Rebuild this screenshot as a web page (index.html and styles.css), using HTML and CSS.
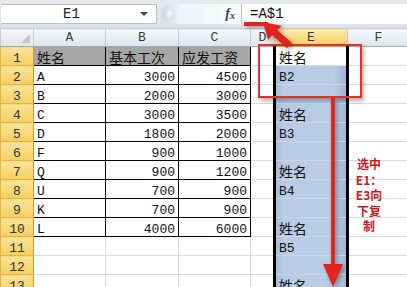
FILE: index.html
```html
<!DOCTYPE html>
<html lang="zh">
<head>
    <meta charset="UTF-8">
    <meta name="viewport" content="width=device-width, initial-scale=1.0">
    <title>向下复制公式</title>
    <link rel="stylesheet" href="styles.css">
</head>
<body>
    <div class="window">
        <div class="formula-bar">
            <div class="name-box">
                <span class="name">E1</span>
                <span class="drop"></span>
            </div>
            <div class="grip"><span></span></div>
            <div class="fx">f<sub>x</sub></div>
            <div class="formula">=A$1</div>
        </div>

        <table class="sheet">
            <colgroup>
                <col class="c-row">
                <col class="c-a">
                <col class="c-b">
                <col class="c-c">
                <col class="c-d">
                <col class="c-e">
                <col class="c-f">
            </colgroup>
            <tr class="hdr">
                <th class="corner"><span></span></th>
                <th>A</th><th>B</th><th>C</th><th>D</th><th class="on">E</th><th>F</th>
            </tr>
            <tr><th>1</th><td class="t h zh">姓名</td><td class="t h zh">基本工次</td><td class="t h zh">应发工资</td><td></td><td class="e act zh">姓名</td><td></td></tr>
            <tr><th>2</th><td class="t">A</td><td class="t n">3000</td><td class="t n">4500</td><td></td><td class="e sel">B2</td><td></td></tr>
            <tr><th>3</th><td class="t">B</td><td class="t n">2000</td><td class="t n">3000</td><td></td><td class="e sel"></td><td></td></tr>
            <tr><th>4</th><td class="t">C</td><td class="t n">3000</td><td class="t n">3500</td><td></td><td class="e sel zh">姓名</td><td></td></tr>
            <tr><th>5</th><td class="t">D</td><td class="t n">1800</td><td class="t n">2000</td><td></td><td class="e sel">B3</td><td></td></tr>
            <tr><th>6</th><td class="t">F</td><td class="t n">900</td><td class="t n">1000</td><td></td><td class="e sel"></td><td></td></tr>
            <tr><th>7</th><td class="t">Q</td><td class="t n">900</td><td class="t n">1200</td><td></td><td class="e sel zh">姓名</td><td></td></tr>
            <tr><th>8</th><td class="t">U</td><td class="t n">700</td><td class="t n">900</td><td></td><td class="e sel">B4</td><td></td></tr>
            <tr><th>9</th><td class="t">K</td><td class="t n">700</td><td class="t n">900</td><td></td><td class="e sel"></td><td></td></tr>
            <tr><th>10</th><td class="t">L</td><td class="t n">4000</td><td class="t n">6000</td><td></td><td class="e sel zh">姓名</td><td></td></tr>
            <tr><th>11</th><td></td><td></td><td></td><td></td><td class="e sel">B5</td><td></td></tr>
            <tr><th>12</th><td></td><td></td><td></td><td></td><td class="e sel"></td><td></td></tr>
            <tr><th>13</th><td></td><td></td><td></td><td></td><td class="e sel zh">姓名</td><td></td></tr>
            <tr><th>14</th><td></td><td></td><td></td><td></td><td class="e sel">B6</td><td></td></tr>
        </table>

        <!-- annotations drawn over the sheet -->
        <div class="mark-box"></div>
        <svg class="arrows" width="407" height="287" viewBox="0 0 407 287">
            <g fill="#e3231d" stroke="none">
                <rect x="244" y="22" width="24" height="4"/>
                <path d="M263 22 L282 26 L277 30 L292 43 L287 48 L272 35 L268 40 Z"/>
                <rect x="331" y="98" width="4" height="170"/>
                <path d="M323 264 L343 264 L333 287 Z"/>
            </g>
        </svg>
        <div class="note">
            <span>选中</span>
            <span>E1：</span>
            <span>E3向</span>
            <span>下复</span>
            <span>制</span>
        </div>
    </div>
</body>
</html>
```

FILE: styles.css
```css
body {
    margin: 0;
    background-color: #fff;
    font-family: "Liberation Mono", "Noto Sans CJK SC", monospace;
    overflow: hidden;
}
.window {
    position: relative;
    width: 407px;
    height: 287px;
    overflow: hidden;
}

/* formula bar */
.formula-bar {
    display: flex;
    height: 28px;
    box-sizing: border-box;
    padding: 4px 0 4px 0;
    background: linear-gradient(#e6eaef, #dde2e8);
}
.name-box {
    display: flex;
    align-items: center;
    width: 156px;
    margin-left: 1px;
    background-color: #fff;
    border: 1px solid #b7c1cd;
    border-left: none;
    box-sizing: border-box;
}
.name {
    flex: 1;
    text-align: center;
    font-size: 14px;
    color: #222;
    padding-left: 2px;
}
.drop {
    width: 0;
    height: 0;
    margin-right: 8px;
    border-left: 4px solid transparent;
    border-right: 4px solid transparent;
    border-top: 4px solid #444;
}
.grip {
    width: 18px;
    display: flex;
    align-items: center;
    justify-content: center;
    background: linear-gradient(90deg, #d2d8df, #eef1f4);
    border-radius: 10px 0 0 10px;
    margin-left: 4px;
}
.grip span {
    width: 9px;
    height: 9px;
    border-radius: 50%;
    background: radial-gradient(circle at 40% 40%, #fff, #c9d0d8);
}
.fx {
    width: 56px;
    text-align: right;
    padding-right: 6px;
    font-family: "Liberation Serif", serif;
    font-style: italic;
    font-weight: bold;
    font-size: 14px;
    line-height: 20px;
    color: #444;
    background: linear-gradient(90deg, #f1f3f6, #fafbfc);
}
.fx sub {
    font-size: 10px;
    vertical-align: -1px;
}
.formula {
    flex: 1;
    background-color: #fff;
    border-left: 1px solid #b7c1cd;
    padding-left: 8px;
    font-size: 14px;
    line-height: 20px;
    color: #111;
}

/* sheet */
.sheet {
    border-collapse: collapse;
    table-layout: fixed;
    width: 409px;
}
.c-row { width: 33px; }
.c-a { width: 72px; }
.c-b { width: 73px; }
.c-c { width: 72px; }
.c-d { width: 24px; }
.c-e { width: 73px; }
.c-f { width: 62px; }

.sheet tr {
    height: 18px;
}
.sheet td,
.sheet th {
    padding: 0 3px;
    height: 18px;
    font-size: 13px;
    font-weight: normal;
    line-height: 12px;
    vertical-align: bottom;
    white-space: nowrap;
    overflow: hidden;
    border: 1px solid #d9dbde;
    color: #111;
}
.sheet th {
    text-align: center;
    padding: 0;
    color: #333;
    background: linear-gradient(#fbe39a, #f6cf5d);
    border-color: #e2b548;
    border-right: 1px solid #c99a34;
}
.sheet .hdr {
    height: 17px;
}
.sheet .hdr th {
    height: 17px;
    line-height: 14px;
    vertical-align: middle;
    color: #3a3a3a;
    background: linear-gradient(#f7f9fb, #dfe4ea);
    border: 1px solid #c5ccd5;
    border-bottom: 1px solid #9eaabb;
}
.sheet .hdr th.on {
    background: linear-gradient(#fde9a8, #f6d066);
    border-bottom-color: #d9a93c;
}
.sheet .hdr .corner {
    position: relative;
}
.corner span {
    position: absolute;
    right: 3px;
    bottom: 3px;
    width: 0;
    height: 0;
    border-left: 9px solid transparent;
    border-bottom: 9px solid #c2c8cf;
}

.sheet td.t {
    border: 1px solid #000;
}
.sheet td.h {
    background-color: #a6a6a6;
}
.sheet td.n {
    text-align: right;
}
.sheet td.zh {
    font-size: 14px;
}
.sheet td.e {
    border-left: 3px solid #000;
    border-right: 3px solid #000;
    border-top-color: #c8d5e8;
    border-bottom-color: #c8d5e8;
}
.sheet td.sel {
    background: linear-gradient(90deg, #aabfdc, #b9cce5 12%, #b9cce5 82%, #9fb5d5);
}
.sheet td.act {
    background-color: #fff;
    border-bottom-color: #d9dbde;
}

/* annotations */
.mark-box {
    position: absolute;
    left: 258px;
    top: 44px;
    width: 104px;
    height: 54px;
    box-sizing: border-box;
    border: 2px solid #e4302a;
    box-shadow: 2px 3px 4px rgba(0, 0, 0, 0.3);
}
.arrows {
    position: absolute;
    left: 0;
    top: 0;
    filter: drop-shadow(2px 2px 2px rgba(0, 0, 0, 0.35));
}
.note {
    position: absolute;
    left: 350px;
    top: 156px;
    width: 38px;
    display: flex;
    flex-direction: column;
    align-items: center;
    font-family: "Noto Sans CJK SC", "Liberation Sans", sans-serif;
    font-weight: bold;
    font-size: 12px;
    color: #d4161b;
}
.note span {
    height: 15.5px;
    line-height: 15.5px;
}
```
